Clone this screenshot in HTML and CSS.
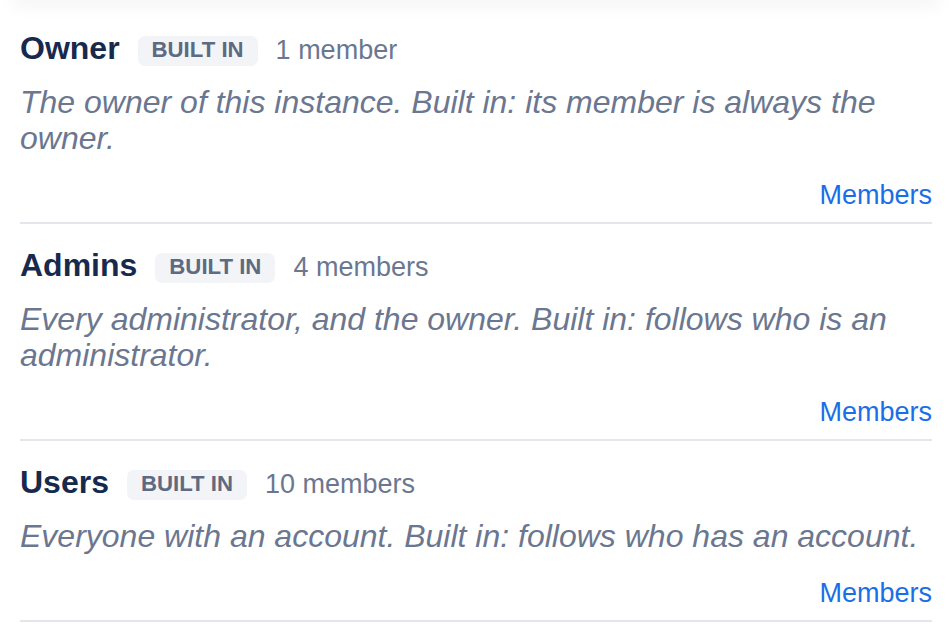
FILE: index.html
```html
<!DOCTYPE html>
<html lang="en">
<head>
<meta charset="utf-8">
<title>Groups</title>
<link rel="stylesheet" href="styles.css">
</head>
<body>
<div class="topbar"></div>
<main class="groups">
  <section class="group">
    <div class="head">
      <h2 class="name">Owner</h2>
      <span class="badge">BUILT IN</span>
      <span class="count">1 member</span>
    </div>
    <p class="desc">The owner of this instance. Built in: its member is always the owner.</p>
    <div class="actions"><a class="link" href="#">Members</a></div>
  </section>
  <section class="group">
    <div class="head">
      <h2 class="name">Admins</h2>
      <span class="badge">BUILT IN</span>
      <span class="count">4 members</span>
    </div>
    <p class="desc">Every administrator, and the owner. Built in: follows who is an administrator.</p>
    <div class="actions"><a class="link" href="#">Members</a></div>
  </section>
  <section class="group">
    <div class="head">
      <h2 class="name">Users</h2>
      <span class="badge">BUILT IN</span>
      <span class="count">10 members</span>
    </div>
    <p class="desc">Everyone with an account. Built in: follows who has an account.</p>
    <div class="actions"><a class="link" href="#">Members</a></div>
  </section>
</main>
</body>
</html>
```

FILE: styles.css
```css
html, body {
  margin: 0;
  padding: 0;
  background: #ffffff;
}

body {
  font-family: "Liberation Sans", Arial, Helvetica, sans-serif;
  overflow: hidden;
}

.topbar {
  height: 10px;
  margin: -10px 12px 0;
  box-shadow: 0 4px 18px rgba(15, 23, 42, 0.07);
}

.groups {
  padding: 5px 20px 0;
}

.group {
  border-bottom: 2px solid #e4e6eb;
  padding: 23px 0 11px;
}

.group:first-child {
  padding-top: 25px;
}

.head {
  display: flex;
  align-items: center;
  gap: 18px;
}

.name {
  margin: 0;
  font-size: 32px;
  line-height: 36px;
  font-weight: 700;
  color: #172a4e;
}

.badge {
  margin-top: 6px;
  padding: 1px 14px 3px;
  font-size: 22.2px;
  line-height: 26px;
  font-weight: 700;
  color: #5d6a82;
  background: #f2f4f7;
  border-radius: 7px;
}

.count {
  margin-top: 4px;
  font-size: 27px;
  line-height: 32px;
  color: #6b7790;
}

.desc {
  margin: 18px 0 0;
  font-size: 32px;
  line-height: 36px;
  font-style: italic;
  color: #6b7790;
}

.actions {
  margin-top: 23px;
  display: flex;
  justify-content: flex-end;
}

.link {
  font-size: 27px;
  line-height: 32px;
  color: #1a6ee6;
  text-decoration: none;
}
```
